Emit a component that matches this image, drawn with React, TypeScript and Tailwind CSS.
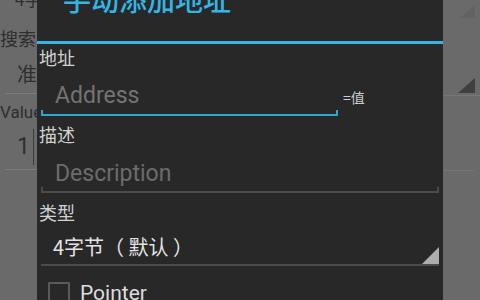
const cjk = "font-['Noto_Sans_CJK_SC','Roboto',sans-serif]";
const latin = "font-['Roboto','Noto_Sans_CJK_SC',sans-serif]";

function LeftStrip() {
  return (
    <div className={`w-[37px] shrink-0 overflow-hidden text-[#2e2e2e] ${cjk}`}>
      <div className="h-[10px] overflow-hidden">
        <div className="-mt-[11px] pl-[15px] text-[17px] leading-[20px] whitespace-nowrap">4字节</div>
      </div>
      <div className="mt-[18px] text-[18px] leading-[21px] whitespace-nowrap">搜索</div>
      <div className="mt-[13px] pl-[17px] text-[20px] leading-[24px] whitespace-nowrap">准确</div>
      <div className="mt-[7px] ml-[5px] h-px bg-[#7b7b7b]" />
      <div className={`mt-[8px] text-[17px] leading-[20px] whitespace-nowrap ${latin}`}>Value</div>
      <div className="mt-[6px] flex items-center h-[38px] pl-[17px]">
        <span className={`text-[23px] leading-[26px] ${latin}`}>1</span>
        <span className="ml-[3px] w-px h-[36px] bg-[#3c3c3c]" />
      </div>
      <div className="mt-[3px] ml-[5px] h-px bg-[#7b7b7b]" />
    </div>
  );
}

function RightStrip() {
  return (
    <div className="w-[37px] shrink-0 flex flex-col">
      <svg className="mt-[5px] ml-[17px] shrink-0" width="15" height="13" viewBox="0 0 15 13">
        <polygon points="15,0 15,13 0,13" fill="#636363" />
      </svg>
      <svg className="mt-[60px] ml-[15px] shrink-0" width="17" height="15" viewBox="0 0 17 15">
        <polygon points="17,0 17,15 0,15" fill="#3f3f3f" />
      </svg>
      <div className="mt-[2px] h-px bg-[#767676]" />
      <div className="mt-[74px] mr-[6px] h-px bg-[#747474]" />
    </div>
  );
}

function Label({ text, pt }: { text: string; pt: string }) {
  return (
    <div className={`${pt} pl-[2px] text-[18px] leading-[22px] text-[#d2d2d2] ${cjk}`}>{text}</div>
  );
}

function Dialog() {
  return (
    <div className="w-[406px] shrink-0 h-[300px] bg-[#282828] overflow-hidden">
      <div className="h-[41px] flex items-end pl-[26px] overflow-hidden">
        <span className={`mb-[28px] text-[28px] leading-[28px] font-medium text-[#33b5e5] whitespace-nowrap ${cjk}`}>
          手动添加地址
        </span>
      </div>
      <div className="h-[3px] bg-[#33b5e5]" />

      <Label text="地址" pt="pt-[2px]" />
      <div className="flex items-start">
        <div className="ml-[4px] w-[297px]">
          <div className={`pt-[15px] pl-[14px] text-[23px] leading-[26px] text-[#747474] ${latin}`}>Address</div>
          <div className="mt-[1px] h-[6px] border-x-2 border-b-2 border-[#2ca6d3]" />
        </div>
        <span className={`mt-[21px] ml-[5px] text-[14px] leading-[16px] text-[#cccccc] ${cjk}`}>=值</span>
      </div>

      <Label text="描述" pt="pt-[7px]" />
      <div className="mx-[4px]">
        <div className={`pt-[16px] pl-[14px] text-[23px] leading-[26px] text-[#6c6c6c] ${latin}`}>Description</div>
        <div className="h-[6px] border-x-2 border-b-2 border-[#4c4c4c]" />
      </div>

      <Label text="类型" pt="pt-[8px]" />
      <div className="mx-[4px] h-[43px] flex justify-between items-end border-b-2 border-[#4c4c4c]">
        <span className={`self-start pt-[12px] pl-[12px] text-[20px] leading-[24px] text-[#e4e4e4] whitespace-pre ${cjk}`}>
          4字节（ 默认 ）
        </span>
        <svg className="shrink-0" width="17" height="17" viewBox="0 0 17 17">
          <polygon points="17,0 17,17 0,17" fill="#adadad" />
        </svg>
      </div>

      <div className="flex items-start pl-[11px]">
        <div className="mt-[16px] shrink-0 w-[22px] h-[22px] border-2 border-[#5a5a5a] rounded-[1px]" />
        <span className={`mt-[15px] ml-[10px] text-[21px] leading-[24px] text-[#dddddd] ${latin}`}>Pointer</span>
      </div>
    </div>
  );
}

export default function App() {
  return (
    <div className="w-[480px] h-[300px] flex bg-[#6a6a6a] overflow-hidden">
      <LeftStrip />
      <Dialog />
      <RightStrip />
    </div>
  );
}
